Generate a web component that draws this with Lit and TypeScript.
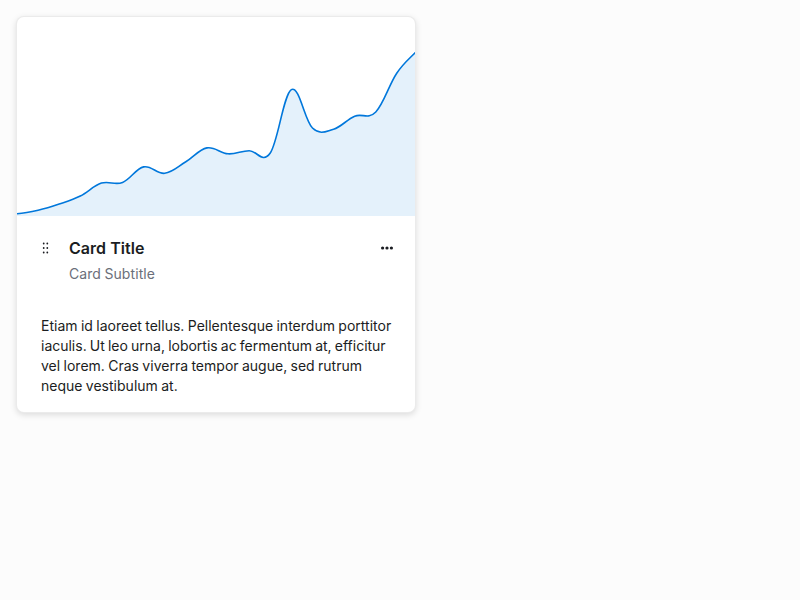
import { LitElement, html, css, svg } from "lit";
import { customElement } from "lit/decorators.js";

const SERIES = [
  196.8, 193.2, 187, 179, 166.1, 165.5, 149.9, 156.3, 144.8, 130.9, 136.8, 133.7, 136, 72.6,
  111, 112.2, 99.2, 95, 56, 32.7,
];
// The plot is slightly wider than the card, which clips its right edge.
const WIDTH = 401;
const HEIGHT = 199;

function smoothPath(values: number[]): string {
  const last = values.length - 1;
  const step = WIDTH / last;
  const at = (i: number) => {
    if (i < 0) return values[0];
    return i > last ? 2 * values[last] - values[last - 1] : values[i];
  };
  // Handles a little longer than a third of the step round off the turns.
  const k = 0.37;
  let d = `M0 ${values[0]}`;
  for (let i = 0; i < last; i++) {
    const x = i * step;
    const c1 = at(i) + ((at(i + 1) - at(i - 1)) / 2) * k;
    const c2 = at(i + 1) - ((at(i + 2) - at(i)) / 2) * k;
    d += ` C${x + step * k} ${c1} ${x + step * (1 - k)} ${c2} ${x + step} ${at(i + 1)}`;
  }
  return d;
}

@customElement("spark-area")
export class SparkArea extends LitElement {
  static styles = css`
    :host { display: block; height: 199px; overflow: hidden; }
    svg { display: block; }
    .area { fill: #e4f1fb; }
    .line { fill: none; stroke: #0077db; stroke-width: 1.6; }
  `;
  render() {
    const line = smoothPath(SERIES);
    return html`<svg width="402" height=${HEIGHT} viewBox="0 0 402 199">
      ${svg`<path class="area" d="${line} V199 H0 Z"></path><path class="line" d=${line}></path>`}
    </svg>`;
  }
}

@customElement("app-root")
export class AppRoot extends LitElement {
  static styles = css`
    :host {
      display: block;
      box-sizing: border-box;
      min-height: 100vh;
      padding: 16px;
      background: #fcfcfc;
      color: #1b1d22;
      font-family: Inter, sans-serif;
      font-size: 14px;
      line-height: 20px;
    }
    .card {
      box-sizing: border-box;
      width: 400px;
      height: 397px;
      border: 1px solid rgba(0, 0, 0, 0.08);
      border-radius: 8px;
      background: #fff;
      box-shadow: 0 2px 6px rgba(0, 0, 0, 0.13);
      overflow: hidden;
    }
    .header {
      display: grid;
      grid-template-columns: 8px 1fr 16px;
      column-gap: 20px;
      padding: 20px 20px 0 24px;
    }
    .icon { display: block; fill: #1b1d22; margin-top: 4px; }
    .title { font-size: 16px; font-weight: 600; line-height: 24px; letter-spacing: 0.04px; }
    .subtitle {
      color: #6b6f7a;
      margin-top: 4px;
      letter-spacing: 0.08px;
      word-spacing: -0.6px;
    }
    .body { margin: 32px 20px 0 24px; letter-spacing: 0.01px; word-spacing: -0.6px; }
    .line { display: block; white-space: nowrap; }
    .tight { letter-spacing: -0.01px; word-spacing: -0.75px; }
  `;
  render() {
    return html`<div class="card">
      <spark-area></spark-area>
      <div class="header">
        <svg class="icon" width="8" height="16" viewBox="0 0 8 16">
          ${[3.5, 8, 12.5].map((y) => svg`<circle cx="2.7" cy=${y} r=".9"></circle><circle cx="6.3" cy=${y} r=".9"></circle>`)}
        </svg>
        <div>
          <div class="title">Card Title</div>
          <div class="subtitle">Card Subtitle</div>
        </div>
        <svg class="icon" width="16" height="16" viewBox="0 0 16 16">
          ${[3.6, 8, 12.4].map((x) => svg`<circle cx=${x} cy="8" r="1.6"></circle>`)}
        </svg>
      </div>
      <div class="body">
        <span class="line">Etiam id laoreet tellus. Pellentesque interdum porttitor</span>
        <span class="line tight">iaculis. Ut leo urna, lobortis ac fermentum at, efficitur</span>
        <span class="line">vel lorem. Cras viverra tempor augue, sed rutrum</span>
        <span class="line">neque vestibulum at.</span>
      </div>
    </div>`;
  }
}
